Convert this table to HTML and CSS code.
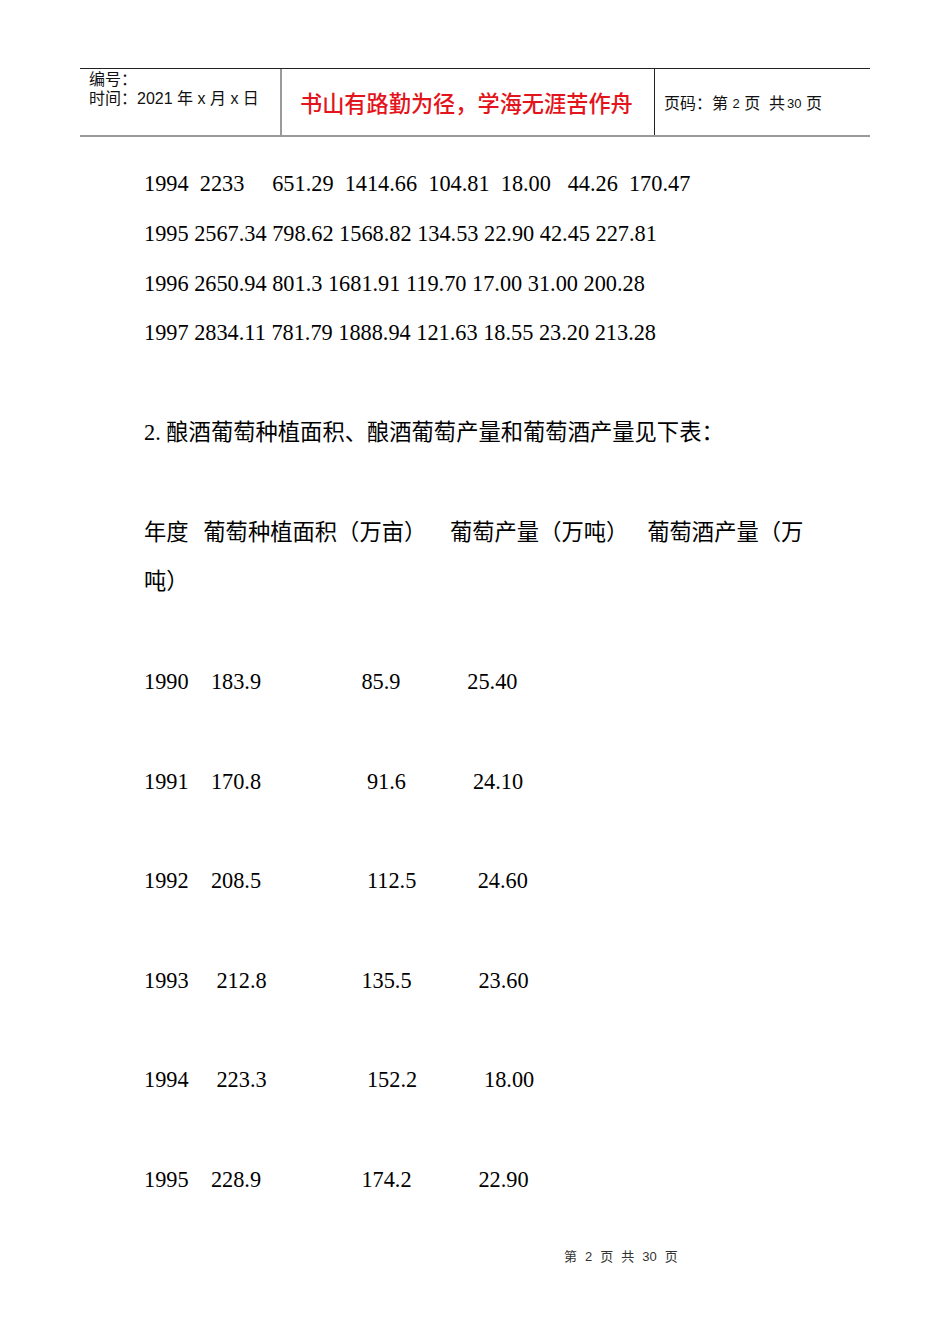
FILE: index.html
```html
<!DOCTYPE html>
<html lang="zh-CN">
<head>
<meta charset="utf-8">
<title>第 2 页</title>
<link rel="stylesheet" href="styles.css">
</head>
<body>
<div class="page">
  <header class="hdr">
    <div class="cell cell-info">
      <div class="info-line">编号：</div>
      <div class="info-line">时间：2021 年 x 月 x 日</div>
    </div>
    <div class="cell cell-motto">书山有路勤为径，学海无涯苦作舟</div>
    <div class="cell cell-page">页码：第 <span class="num">2</span> 页&nbsp;&nbsp;共<span class="num num-gap">30</span> 页</div>
  </header>

  <main class="doc">
    <p class="row">1994  2233     651.29  1414.66  104.81  18.00   44.26  170.47</p>
    <p class="row">1995 2567.34 798.62 1568.82 134.53 22.90 42.45 227.81</p>
    <p class="row">1996 2650.94 801.3 1681.91 119.70 17.00 31.00 200.28</p>
    <p class="row">1997 2834.11 781.79 1888.94 121.63 18.55 23.20 213.28</p>

    <p class="para gap">2. 酿酒葡萄种植面积、酿酒葡萄产量和葡萄酒产量见下表：</p>

    <p class="para gap"><span class="seg">年度</span><span class="seg seg2">葡萄种植面积（万亩）</span><span class="seg seg3">葡萄产量（万吨）</span><span class="seg seg4">葡萄酒产量（万</span><br><span class="seg">吨）</span></p>

    <p class="row gap">1990    183.9                  85.9            25.40</p>
    <p class="row gap">1991    170.8                   91.6            24.10</p>
    <p class="row gap">1992    208.5                   112.5           24.60</p>
    <p class="row gap">1993     212.8                 135.5            23.60</p>
    <p class="row gap">1994     223.3                  152.2            18.00</p>
    <p class="row gap">1995    228.9                  174.2            22.90</p>
  </main>

  <footer class="foot">第 2 页 共 30 页</footer>
</div>
</body>
</html>
```
FILE: styles.css
```css
html, body {
  margin: 0;
  padding: 0;
  background: #ffffff;
}

.page {
  width: 950px;
  min-height: 1344px;
  padding-top: 68px;
  box-sizing: border-box;
}

/* ---------- header table ---------- */
.hdr {
  display: flex;
  margin-left: 80px;
  width: 790px;
  height: 69px;
  box-sizing: border-box;
  border-top: 1px solid #222222;
  border-bottom: 2px solid #9a9a9a;
  font-family: "Liberation Sans", "Noto Sans CJK SC", sans-serif;
  color: #111111;
}

.cell {
  box-sizing: border-box;
}

.cell-info {
  width: 202px;
  border-right: 2px solid #9a9a9a;
  padding: 1px 0 0 9px;
  font-size: 16px;
  line-height: 19px;
  white-space: nowrap;
}

.cell-motto {
  width: 373px;
  border-right: 1px solid #222222;
  display: flex;
  align-items: center;
  padding: 5px 0 0 18px;
  font-size: 22.2px;
  line-height: 30px;
  color: #e3141b;
  font-weight: 500;
  white-space: nowrap;
}

.cell-page {
  flex: 1;
  display: flex;
  align-items: center;
  padding: 4px 0 0 9px;
  font-size: 16px;
  line-height: 20px;
  white-space: pre;
}

.cell-page .num {
  font-size: 13px;
}

.cell-page .num-gap {
  margin-left: 2px;
}

/* ---------- document body ---------- */
.doc {
  margin: 22px 0 0 144px;
  width: 670px;
  font-family: "Liberation Serif", "Noto Sans CJK SC", serif;
  font-size: 22.3px;
  line-height: 49.8px;
  color: #000000;
}

.doc p {
  margin: 0;
}

.row {
  white-space: pre;
}

.gap {
  margin-top: 49.8px !important;
}

.seg {
  white-space: nowrap;
}

.seg2 { margin-left: 14.7px; }
.seg3 { margin-left: 23.7px; }
.seg4 { margin-left: 18.9px; }

/* ---------- footer ---------- */
.foot {
  margin-top: 44.6px;
  padding-left: 564px;
  font-family: "Liberation Sans", "Noto Sans CJK SC", sans-serif;
  font-size: 13px;
  line-height: 16px;
  word-spacing: 4.4px;
  color: #333333;
}
```
